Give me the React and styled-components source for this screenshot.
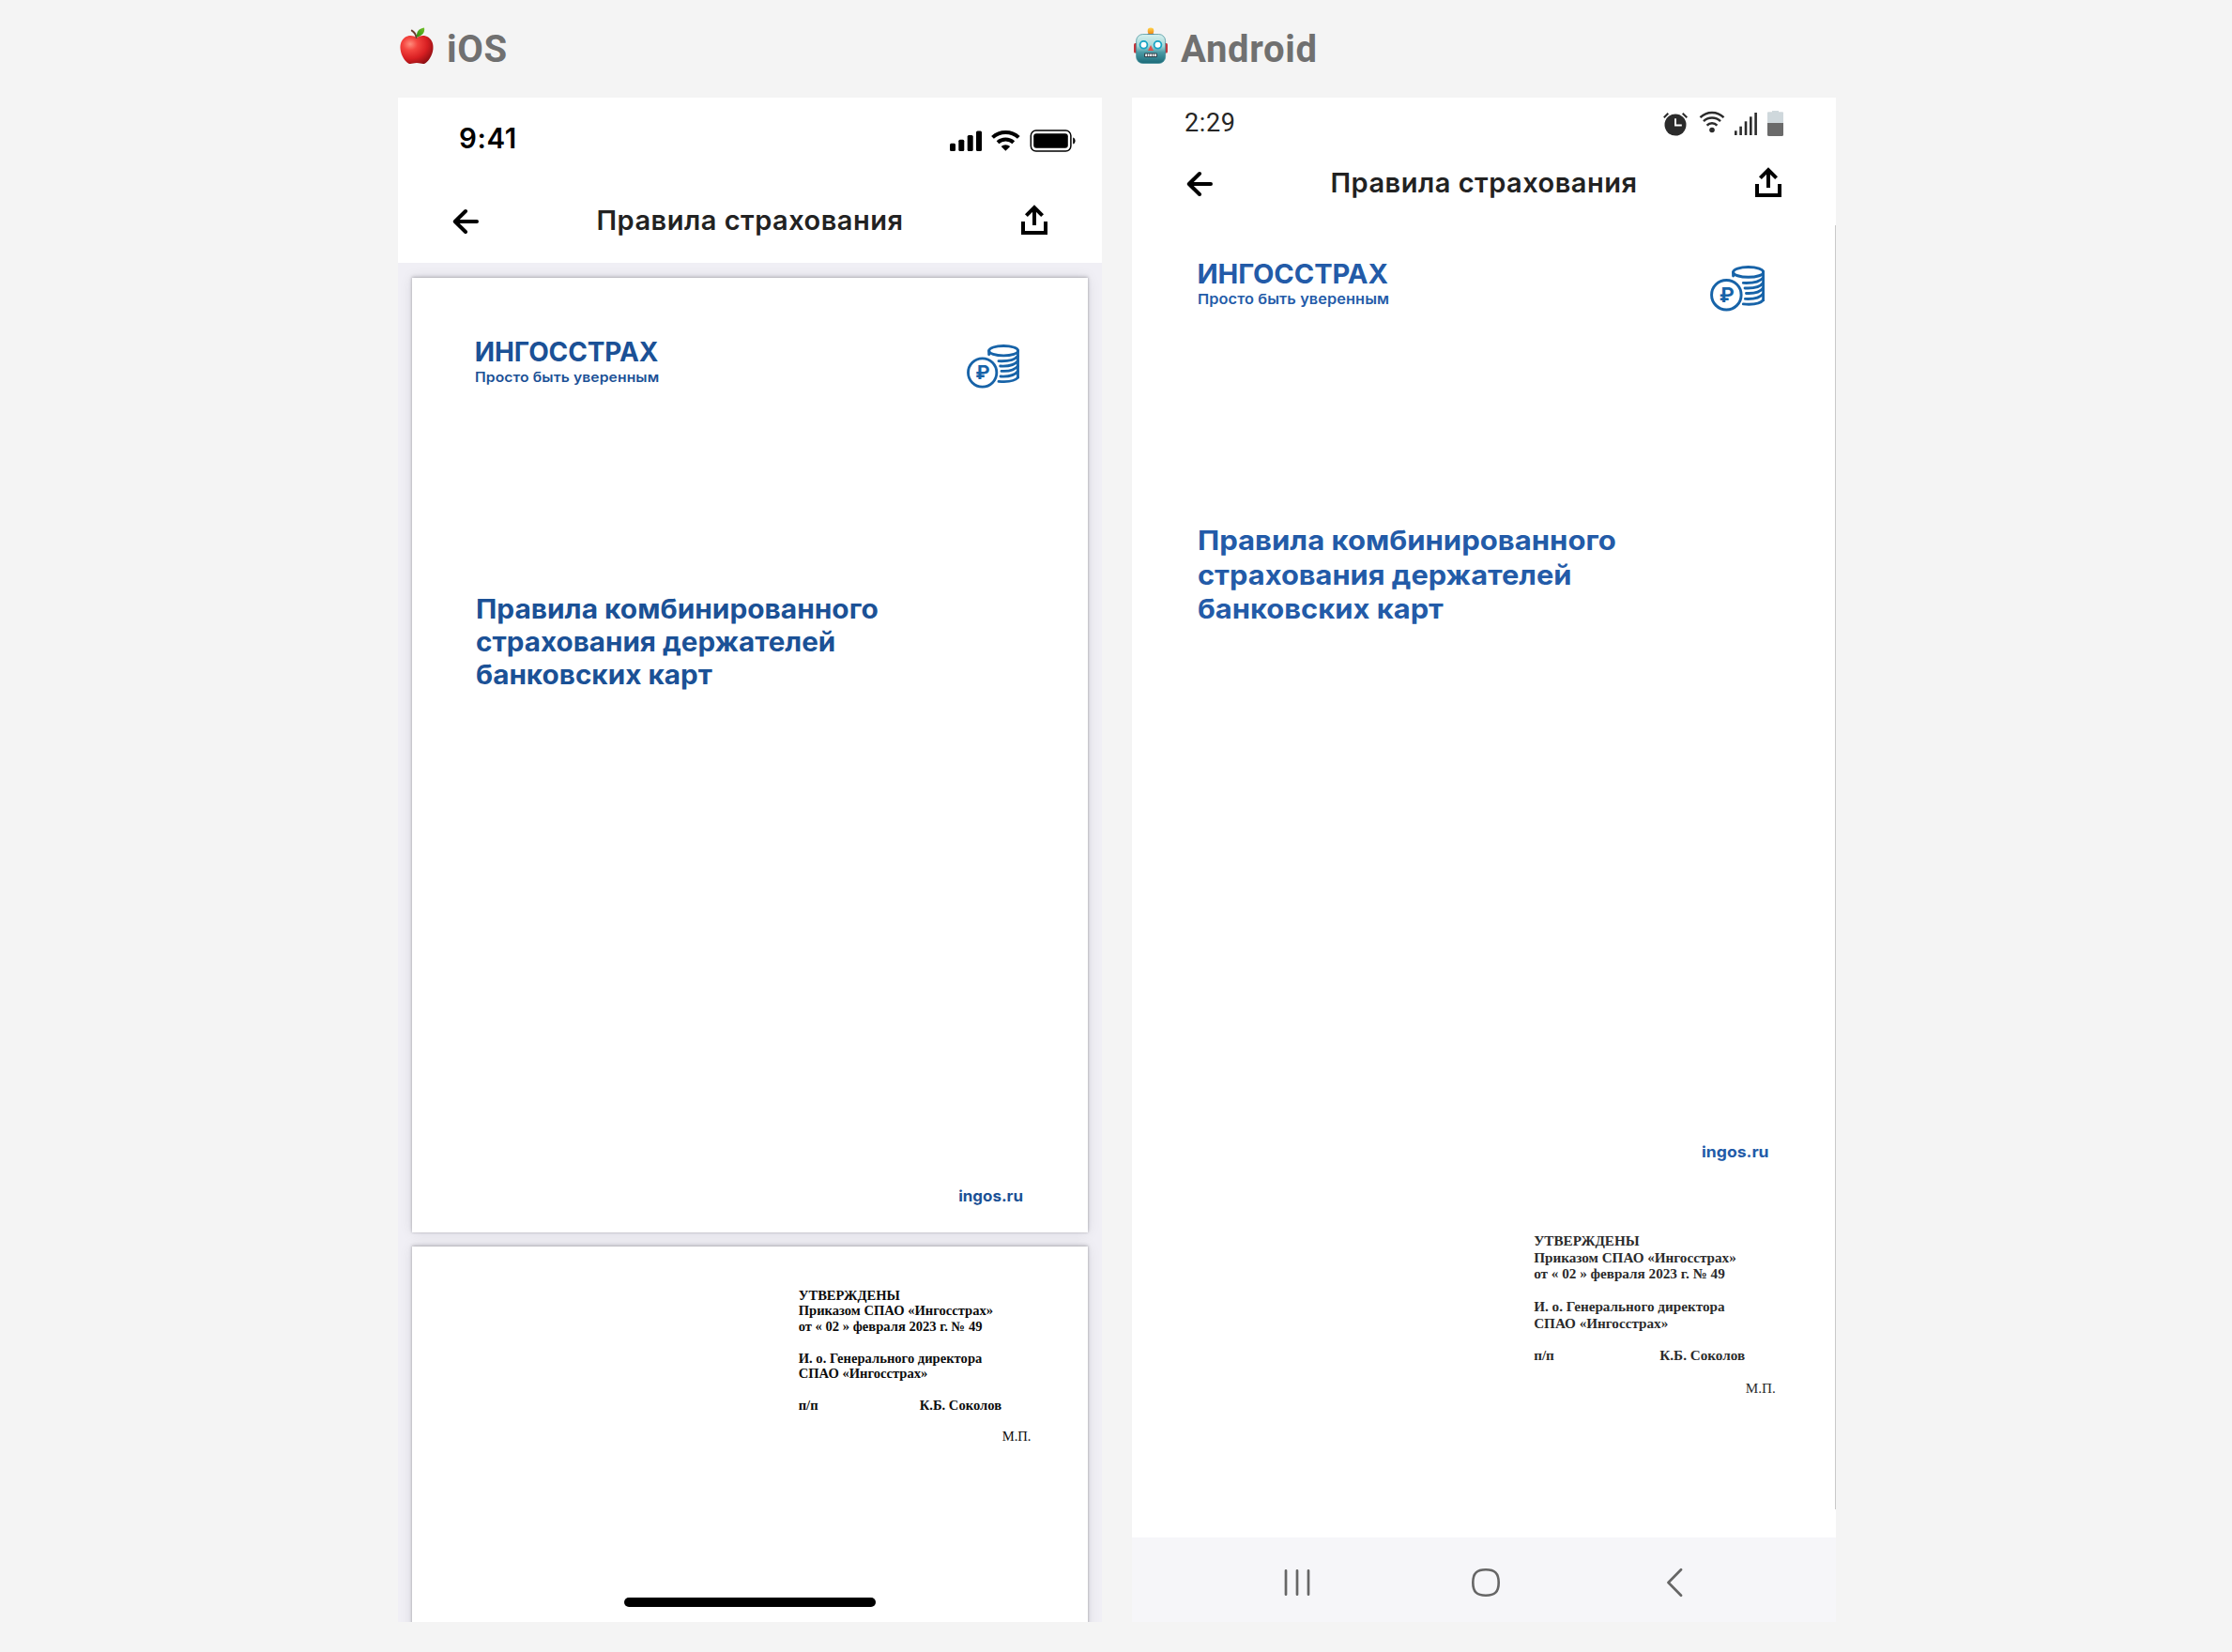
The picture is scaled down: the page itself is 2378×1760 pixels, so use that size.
import React from "react";
import styled, { createGlobalStyle } from "styled-components";

const GlobalStyle = createGlobalStyle`
  * { box-sizing: border-box; }
  body { margin: 0; background: #f4f4f4; }
  svg { display: block; flex: none; }
`;

const inter = `Inter, "Noto Sans", sans-serif`;
const roboto = `Roboto, "Noto Sans", sans-serif`;
const serif = `"Liberation Serif", "Times New Roman", serif`;

const Board = styled.main`
  display: flex;
  gap: 32px;
  width: 2378px;
  height: 1760px;
  padding-left: 424px;
  background: #f4f4f4;
  overflow: hidden;
`;

const Column = styled.section`
  width: 750px;
  display: flex;
  flex-direction: column;
`;

const PlatformTitle = styled.h2`
  display: flex;
  align-items: center;
  gap: 14px;
  height: 104px;
  margin: 0;
  padding: 2px 0 0 2px;
  font: 700 40px/46px ${roboto};
  letter-spacing: 0.7px;
  color: #707070;
`;

const Emoji = styled.svg`
  width: 36px;
  height: 40px;
  margin-bottom: 9px;
`;

const Screen = styled.div`
  position: relative;
  display: flex;
  flex-direction: column;
  height: 1624px;
  background: #fff;
  overflow: hidden;
`;

const StatusBar = styled.div`
  display: flex;
  justify-content: space-between;
  align-items: flex-start;
  flex: none;
  height: ${(p) => (p.$ios ? 88 : 48)}px;
  padding: ${(p) => (p.$ios ? "28px 27px 0 65px" : "13px 56px 0 56px")};
`;

const Clock = styled.span`
  margin-top: ${(p) => (p.$ios ? 0 : 1)}px;
  font: ${(p) => (p.$ios ? `600 29.5px/30px ${inter}` : `400 27px/27px ${roboto}`)};
  letter-spacing: 0.6px;
  color: ${(p) => (p.$ios ? "#000" : "#262626")};
`;

const StatusIcons = styled.div`
  display: flex;
  gap: 10px;
  margin-top: ${(p) => (p.$ios ? 6 : 1)}px;
`;

const NavBar = styled.header`
  display: grid;
  grid-template-columns: 28px 1fr 28px;
  align-items: center;
  flex: none;
  height: 88px;
  padding: 0 58px;
`;

const NavTitle = styled.h1`
  margin: 0;
  padding-bottom: 2px;
  text-align: center;
  font: 600 29px/36px ${inter};
  letter-spacing: 0.5px;
  color: #222;
`;

const Viewer = styled.div`
  --u: ${(p) => (p.$ios ? "1px" : "1.04px")};
  --ink: ${(p) => (p.$ios ? "#1b5196" : "#235ba8")};
  --print: ${(p) => (p.$ios ? "#0c0c0c" : "#2b2b2b")};
  display: flex;
  flex-direction: column;
  flex: none;
  gap: ${(p) => (p.$ios ? 15 : 0)}px;
  height: ${(p) => (p.$ios ? 1448 : 1368)}px;
  padding: ${(p) => (p.$ios ? "16px 15px 0" : "0")};
  background: ${(p) => (p.$ios ? "#f0eff5" : "#fff")};
  box-shadow: ${(p) => (p.$ios ? "none" : "inset -1px 0 0 #c9c9c9")};
  overflow: hidden;
`;

const Sheet = styled.article`
  display: flex;
  flex-direction: column;
  flex: none;
  height: ${(p) => p.$height}px;
  ${(p) =>
    p.$raised &&
    `background: #fff;
     box-shadow: 0 0 14px rgba(20, 20, 40, 0.09), 0 -1px 4px rgba(0, 0, 0, 0.2), 0 0 2px rgba(0, 0, 0, 0.16);`}
`;

const Cover = styled(Sheet)`
  padding: ${(p) => p.$top}px calc(var(--u) * 69) calc(var(--u) * 29) calc(var(--u) * 67);
  font-family: ${inter};
  color: var(--ink);
`;

const CoverHead = styled.div`
  display: flex;
  justify-content: space-between;
  align-items: flex-start;
  padding-right: calc(var(--u) * 4);
`;

const BrandName = styled.div`
  margin-left: calc(var(--u) * -0.2);
  font-size: calc(var(--u) * 28);
  line-height: calc(var(--u) * 28);
  font-weight: 700;
  letter-spacing: calc(var(--u) * -0.12);
`;

const BrandTagline = styled.div`
  width: max-content;
  margin-top: calc(var(--u) * 2.5);
  font-size: calc(var(--u) * 14.5);
  line-height: calc(var(--u) * 20);
  font-weight: 600;
  letter-spacing: calc(var(--u) * 0.1);
  transform: scaleX(1.08);
  transform-origin: left;
`;

const DocTitle = styled.div`
  margin: calc(var(--u) * 218) 0 0 calc(var(--u) * 0.5);
  font-size: calc(var(--u) * 28);
  line-height: calc(var(--u) * 35);
  font-weight: 700;
  white-space: nowrap;
`;

const TitleLine = styled.div`
  transform: scaleX(${(p) => p.$stretch});
  transform-origin: left;
`;

const Site = styled.div`
  align-self: flex-end;
  margin-top: auto;
  font-size: calc(var(--u) * 16);
  line-height: calc(var(--u) * 20);
  font-weight: 700;
  transform: scaleX(1.058);
  transform-origin: right;
`;

const Approval = styled(Sheet)`
  padding: calc(var(--u) * 43.7) 0 0 calc(var(--u) * 411.7);
  font: 700 calc(var(--u) * 14.6) / calc(var(--u) * 16.75) ${serif};
  color: var(--print);
  white-space: nowrap;
`;

const Paragraph = styled.div`
  margin-bottom: calc(var(--u) * 16.75);
`;

const Signature = styled(Paragraph)`
  display: grid;
  grid-template-columns: calc(var(--u) * 129) auto;
`;

const Stamp = styled.div`
  padding-left: calc(var(--u) * 217);
  font-weight: 400;
`;

const HomeIndicator = styled.div`
  position: absolute;
  left: 241px;
  bottom: 16px;
  width: 268px;
  height: 10px;
  border-radius: 5px;
  background: #000;
`;

const SystemNav = styled.footer`
  display: grid;
  grid-template-columns: 201px 207px auto;
  align-items: center;
  height: 90px;
  margin-top: auto;
  padding: 6px 0 0 160px;
  background: #f6f6f9;
`;

const CoinsIcon = styled.svg`
  width: calc(var(--u) * 56);
  height: calc(var(--u) * 47);
  margin-top: calc(var(--u) * 5.5);
`;

function Coins() {
  return (
    <CoinsIcon viewBox="0 0 168 141" fill="none" stroke="#1763a8" strokeWidth="8.5" strokeLinecap="round">
      <circle cx="50" cy="90" r="45.5" />
      <ellipse cx="117.5" cy="20" rx="46.5" ry="15.5" />
      <path d="M71 20v12M163.500 20v86" />
      <path d="M102 53c22 1 50-2 61-16M107 69c20 1 46-2 56-16M111 85c18 1 42-2 52-16M108 102c20 1 45-2 55-16M102 118c24 2 52 0 62-13" />
      <text x="51" y="112" textAnchor="middle" fontFamily="Inter, sans-serif" fontSize="62" fontWeight="700" fill="#1763a8" stroke="none">₽</text>
    </CoinsIcon>
  );
}

function AppleEmoji() {
  return (
    <Emoji viewBox="0 0 36 40">
      <defs>
        <radialGradient id="appleSkin" cx="0.3" cy="0.3" r="0.8">
          <stop offset="0" stopColor="#ff8d7d" />
          <stop offset="0.28" stopColor="#f4453f" />
          <stop offset="0.65" stopColor="#d81f22" />
          <stop offset="1" stopColor="#8c0e12" />
        </radialGradient>
        <linearGradient id="appleLeaf" x1="0" y1="1" x2="1" y2="0">
          <stop offset="0" stopColor="#2f8a12" />
          <stop offset="1" stopColor="#74c22a" />
        </linearGradient>
      </defs>
      <path d="M18 11.2C14.5 8.600 9.500 8 5.500 10.800C1.500 13.600 0 18.500 .6 23.500C1.300 29.500 4.500 35.500 9 38.400C11.500 39.900 14 38 18 38S24.500 39.900 27 38.400C31.500 35.500 34.700 29.500 35.400 23.500C36 18.500 34.500 13.600 30.500 10.800C26.500 8 21.500 8.600 18 11.200Z" fill="url(#appleSkin)" />
      <path d="M17.600 11C17 7.500 15.500 5.200 12.800 3.600" fill="none" stroke="#6b3a2c" strokeWidth="1.900" strokeLinecap="round" />
      <path d="M18 10.500C17.500 5 20 1.500 26 .6C27 5.500 24 9.500 18 10.500Z" fill="url(#appleLeaf)" />
    </Emoji>
  );
}

function RobotEmoji() {
  return (
    <Emoji viewBox="0 0 36 40">
      <defs>
        <linearGradient id="robotFace" x1="0" y1="0" x2="0" y2="1">
          <stop offset="0" stopColor="#d5f0ee" />
          <stop offset="0.4" stopColor="#a6d8d8" />
          <stop offset="0.62" stopColor="#4a9aa5" />
          <stop offset="1" stopColor="#1b6a78" />
        </linearGradient>
        <linearGradient id="robotBulb" x1="0" y1="0" x2="0" y2="1">
          <stop offset="0" stopColor="#ffd24a" />
          <stop offset="1" stopColor="#f08a12" />
        </linearGradient>
      </defs>
      <rect x="0" y="17" width="5" height="10.500" rx="1.500" fill="#c4343a" />
      <rect x="31" y="17" width="5" height="10.500" rx="1.500" fill="#c4343a" />
      <path d="M14 9c0-2 1.500-3 4-3s4 1 4 3z" fill="#5d3b78" />
      <circle cx="18" cy="3.900" r="3.300" fill="url(#robotBulb)" />
      <rect x="2.600" y="7.500" width="31" height="31" rx="7" fill="url(#robotFace)" stroke="#3e8d98" strokeWidth=".7" />
      <g fill="#fff" stroke="#16a3c4" strokeWidth="1.800">
        <circle cx="10.500" cy="18.800" r="3.900" />
        <circle cx="25.500" cy="18.800" r="3.900" />
      </g>
      <path d="M18 19l3 6h-6z" fill="#e0524c" />
      <rect x="11" y="27.500" width="14" height="4.400" rx="1" fill="#32414a" />
      <path d="M12.200 29.700h12" stroke="#fff" strokeWidth="2.600" strokeDasharray="1.800 .7" />
    </Emoji>
  );
}

function BackArrow() {
  return (
    <svg width="28" height="28" viewBox="0 0 28 28" fill="none" stroke="#000" strokeWidth="4" strokeLinecap="round" strokeLinejoin="round">
      <path d="M26 14H3M14 3L2.800 14 14 25" />
    </svg>
  );
}

function ShareIcon() {
  return (
    <svg width="28" height="36" viewBox="0 0 28 36" fill="none" stroke="#000" strokeWidth="4">
      <path d="M2 18v12h24V18M14 3.500v18.500M5.400 11.600L14 3l8.600 8.600" />
    </svg>
  );
}

function IosStatusIcons() {
  return (
    <StatusIcons $ios>
      <svg width="34" height="24" viewBox="0 0 34 24">
        <rect x="0" y="14.700" width="6" height="8.200" rx="1.500" />
        <rect x="9.300" y="10.700" width="6" height="12.200" rx="1.500" />
        <rect x="18.700" y="6" width="6" height="16.900" rx="1.500" />
        <rect x="28" y="1.500" width="6" height="21.400" rx="1.500" />
      </svg>
      <svg width="31" height="24" viewBox="0 0 31 24" fill="none" stroke="#000" strokeWidth="4">
        <path d="M1.500 8.400A20.500 20.500 0 0 1 29.300 8.400M7 13.800A12.600 12.600 0 0 1 23.800 13.800" />
        <path d="M15.400 22.800L10.600 18A7.300 7.300 0 0 1 20.200 18Z" fill="#000" stroke="none" />
      </svg>
      <svg width="50" height="24" viewBox="0 0 50 24">
        <rect x="1.300" y="1.100" width="42.600" height="22" rx="5.500" fill="none" stroke="#000" strokeWidth="1.500" />
        <rect x="4.200" y="4.200" width="36.600" height="15.600" rx="3" />
        <path d="M46.200 8.500c3.200 1 3.200 6 0 7z" />
      </svg>
    </StatusIcons>
  );
}

function AndroidStatusIcons() {
  return (
    <StatusIcons>
      <svg width="28" height="27" viewBox="0 0 28 27" fill="none" strokeWidth="2">
        <circle cx="13" cy="15" r="11.500" fill="#2b2b2b" />
        <path d="M.8 7.200L5.300 2.700M20.700 2.700L25.300 7.200" stroke="#2b2b2b" />
        <path d="M13 8.200V15.500H19.800" stroke="#fff" strokeWidth="1.900" />
      </svg>
      <svg width="28" height="27" viewBox="0 0 28 27" fill="none" stroke="#2b2b2b" strokeWidth="2.500">
        <path d="M1.500 7.200A17.600 17.600 0 0 1 26.500 7.200M5 11.200A13 13 0 0 1 23 11.200M8.600 15.600A7.600 7.600 0 0 1 19.400 15.600" />
        <circle cx="14" cy="20.500" r="2.800" fill="#2b2b2b" stroke="none" />
      </svg>
      <svg width="25" height="27" viewBox="0 0 25 27" fill="#2b2b2b">
        <rect x="0" y="21.300" width="2.600" height="4.700" />
        <rect x="5.300" y="16.700" width="2.600" height="9.300" />
        <rect x="10.700" y="11.300" width="2.600" height="14.700" />
        <rect x="16" y="6.300" width="2.600" height="19.700" />
        <rect x="21.300" y="2" width="2.600" height="24" />
      </svg>
      <svg width="17" height="27" viewBox="0 0 17 27">
        <path d="M5 0h7v1.200h4q1 0 1 1V13H0V2.200q0-1 1-1h4z" fill="#cfd8dc" />
        <path d="M0 13h17v12.500q0 1.500-1.500 1.500h-14Q0 27 0 25.500z" fill="#6a6a6a" />
      </svg>
    </StatusIcons>
  );
}

function NavHeader() {
  return (
    <NavBar>
      <BackArrow />
      <NavTitle>Правила страхования</NavTitle>
      <ShareIcon />
    </NavBar>
  );
}

function RulesDocument({ ios }) {
  return (
    <Viewer $ios={ios}>
      <Cover $raised={ios} $height={ios ? 1017 : 1028} $top={ios ? 65 : 37}>
        <CoverHead>
          <div>
            <BrandName>ИНГОССТРАХ</BrandName>
            <BrandTagline>Просто быть уверенным</BrandTagline>
          </div>
          <Coins />
        </CoverHead>
        <DocTitle>
          <TitleLine $stretch={1.067}>Правила комбинированного</TitleLine>
          <TitleLine $stretch={1.058}>страхования держателей</TitleLine>
          <TitleLine $stretch={1.061}>банковских карт</TitleLine>
        </DocTitle>
        <Site>ingos.ru</Site>
      </Cover>
      <Approval $raised={ios} $height={ios ? 500 : 340}>
        <Paragraph>
          <div>УТВЕРЖДЕНЫ</div>
          <div>Приказом СПАО «Ингосстрах»</div>
          <div>от « 02 » февраля 2023 г. № 49</div>
        </Paragraph>
        <Paragraph>
          <div>И. о. Генерального директора</div>
          <div>СПАО «Ингосстрах»</div>
        </Paragraph>
        <Signature>
          <span>п/п</span>
          <span>К.Б. Соколов</span>
        </Signature>
        <Stamp>М.П.</Stamp>
      </Approval>
    </Viewer>
  );
}

export default function App() {
  return (
    <>
      <GlobalStyle />
      <Board>
        <Column>
          <PlatformTitle>
            <AppleEmoji />
            iOS
          </PlatformTitle>
          <Screen>
            <StatusBar $ios>
              <Clock $ios>9:41</Clock>
              <IosStatusIcons />
            </StatusBar>
            <NavHeader />
            <RulesDocument ios />
            <HomeIndicator />
          </Screen>
        </Column>
        <Column>
          <PlatformTitle>
            <RobotEmoji />
            Android
          </PlatformTitle>
          <Screen>
            <StatusBar>
              <Clock>2:29</Clock>
              <AndroidStatusIcons />
            </StatusBar>
            <NavHeader />
            <RulesDocument />
            <SystemNav>
              <svg width="30" height="32" viewBox="0 0 30 32" fill="none" stroke="#666" strokeWidth="2.700" strokeLinecap="round">
                <path d="M4 3.300v25.400M16 3.300v25.400M28 3.300v25.400" />
              </svg>
              <svg width="32" height="32" viewBox="0 0 32 32" fill="none" stroke="#666" strokeWidth="2.600">
                <path d="M16 2.300c9.500 0 13.700 3.500 13.700 13.700S25.500 29.700 16 29.700 2.300 26.200 2.300 16 6.500 2.300 16 2.300z" />
              </svg>
              <svg width="20" height="32" viewBox="0 0 20 32" fill="none" stroke="#666" strokeWidth="2.700" strokeLinecap="round" strokeLinejoin="round">
                <path d="M17 2.200L3.500 16 17 29.800" />
              </svg>
            </SystemNav>
          </Screen>
        </Column>
      </Board>
    </>
  );
}
